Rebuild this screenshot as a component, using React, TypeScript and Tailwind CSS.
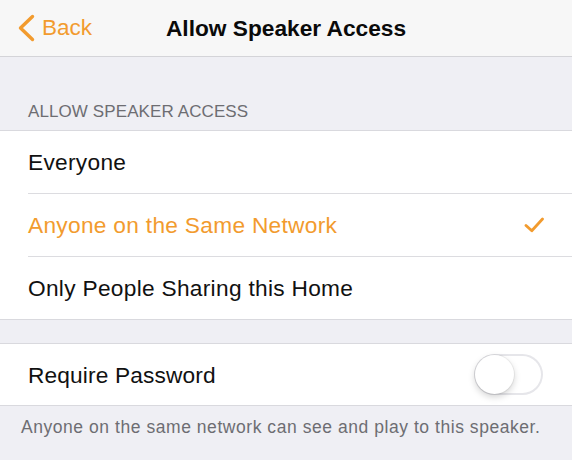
import React from "react";

const font = { fontFamily: '"Liberation Sans", Arial, sans-serif' };

function Row({
  label,
  orange,
  checked,
  last,
}: {
  label: string;
  orange?: boolean;
  checked?: boolean;
  last?: boolean;
}) {
  return (
    <div className="pl-[28px] bg-white">
      <div
        className={`flex items-center justify-between pr-[28px] ${
          last ? "h-[62px]" : "h-[63px] border-b border-[#dcdce0]"
        }`}
      >
        <span
          className={`text-[22.7px] leading-[26px] tracking-[0.3px] ${
            orange ? "text-[#f29b2e]" : "text-[#111111]"
          }`}
        >
          {label}
        </span>
        {checked && (
          <svg width="20" height="16" viewBox="0 0 20 16" className="mr-[0px]">
            <path
              d="M2 8.5 L7.8 13.8 L18.5 2"
              fill="none"
              stroke="#f29b2e"
              strokeWidth="2.8"
              strokeLinecap="round"
              strokeLinejoin="round"
            />
          </svg>
        )}
      </div>
    </div>
  );
}

export default function App() {
  return (
    <div className="w-[572px] h-[460px] bg-[#efeff4] overflow-hidden" style={font}>
      {/* Nav bar */}
      <div className="h-[57px] bg-[#f7f7f7] border-b border-[#d4d4d8] grid grid-cols-[1fr_auto_1fr] items-center">
        <div className="flex items-center pl-[17px] gap-[7px]">
          <svg width="18" height="28" viewBox="0 0 18 28">
            <path
              d="M15.5 2.5 L3.5 14 L15.5 25.5"
              fill="none"
              stroke="#f29b2e"
              strokeWidth="3.4"
              strokeLinecap="round"
              strokeLinejoin="round"
            />
          </svg>
          <span className="text-[22.5px] leading-[26px] text-[#f29b2e]">Back</span>
        </div>
        <div className="text-[22.7px] leading-[26px] font-bold text-[#0a0a0a]">
          Allow Speaker Access
        </div>
        <div />
      </div>

      {/* Section header */}
      <div className="h-[73px] flex items-end pl-[28px] pb-[8px]">
        <span className="text-[17px] leading-[20px] tracking-[0.1px] text-[#6d6d72]">
          ALLOW SPEAKER ACCESS
        </span>
      </div>

      {/* Options list */}
      <div className="border-t border-b border-[#d9d9de] bg-white">
        <Row label="Everyone" />
        <Row label="Anyone on the Same Network" orange checked />
        <Row label="Only People Sharing this Home" last />
      </div>

      <div className="h-[23px]" />

      {/* Require Password */}
      <div className="border-t border-b border-[#d9d9de] bg-white h-[63px] flex items-center justify-between pl-[28px] pr-[29px]">
        <span className="text-[22.7px] leading-[26px] tracking-[0.15px] text-[#111111]">
          Require Password
        </span>
        <div className="relative w-[69px] h-[41px] rounded-full bg-white shadow-[inset_0_0_0_2px_#e6e6ea]">
          <div className="absolute left-[1px] top-[1px] w-[39px] h-[39px] rounded-full bg-white shadow-[0_3px_7px_rgba(0,0,0,0.18),0_0_0_1px_rgba(0,0,0,0.05)]" />
        </div>
      </div>

      {/* Footer */}
      <div className="pl-[21px] pt-[10px]">
        <span className="text-[17.5px] leading-[22px] tracking-[0.55px] text-[#6d6d72]">
          Anyone on the same network can see and play to this speaker.
        </span>
      </div>
    </div>
  );
}
